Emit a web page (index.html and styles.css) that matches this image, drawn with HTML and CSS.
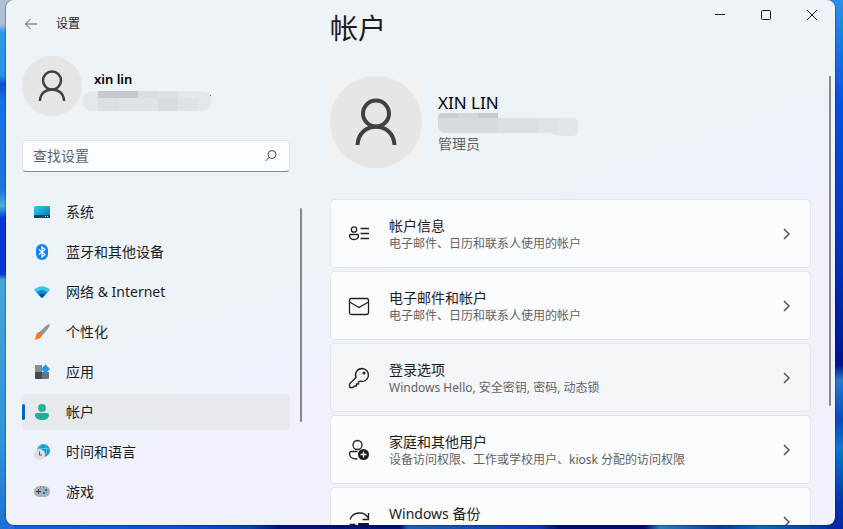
FILE: index.html
```html
<!DOCTYPE html>
<html lang="zh-CN">
<head>
    <meta charset="UTF-8">
    <title>设置</title>
    <meta name="viewport" content="width=device-width, initial-scale=1.0">
    <link rel="stylesheet" href="styles.css">
</head>
<body>
    <div class="window">
        <aside class="sidebar">
            <div class="titlebar">
                <button class="back" aria-label="返回">
                    <svg width="14" height="12" viewBox="0 0 14 12" fill="none" stroke="#555"><path d="M6.5 1 1.5 6l5 5M1.5 6H13"/></svg>
                </button>
                <span>设置</span>
            </div>

            <div class="user">
                <svg class="avatar-small" viewBox="0 0 60 60">
                    <circle cx="30" cy="30" r="30" fill="#e6e6e6"/>
                    <g fill="none" stroke="#404040" stroke-width="2.500"><circle cx="30" cy="24.500" r="9"/><path d="M18 45c0-15.500 24-15.500 24 0"/></g>
                </svg>
                <div class="user-text">
                    <strong>xin lin</strong>
                    <!-- e-mail escondido -->
                    <svg class="mask-small" width="131" height="20" viewBox="0 0 131 20">
                        <clipPath id="mask1"><rect width="130" height="20" rx="10"/></clipPath>
                        <g clip-path="url(#mask1)">
                            <rect width="131" height="20" fill="#e4e8ed"/>
                            <rect x="16" width="40" height="7" fill="#c6c9cf"/>
                            <rect x="56" width="20" height="7" fill="#dadde2"/>
                            <rect x="76" width="20" height="7" fill="#dde1e5"/>
                            <rect x="16" y="7" width="20" height="13" fill="#dcdfe4"/>
                            <rect x="36" y="7" width="40" height="13" fill="#e0e4e8"/>
                            <rect x="76" y="7" width="20" height="13" fill="#d8dce1"/>
                            <rect x="96" y="7" width="20" height="13" fill="#dfe3e8"/>
                        </g>
                        <rect x="128" y="4" width="1" height="1" fill="#777"/>
                    </svg>
                </div>
            </div>

            <form class="search">
                <input type="text" placeholder="查找设置" aria-label="查找设置">
                <button type="button" aria-label="搜索">
                    <svg width="12" height="12" viewBox="0 0 12 12" fill="none" stroke="#444"><circle cx="7" cy="4.500" r="4"/><path d="M4 7.500.5 11"/></svg>
                </button>
            </form>

            <nav class="menu">
                <a href="#">
                    <svg viewBox="0 0 16 16">
                        <defs><linearGradient id="sys" x2="1" y2="1"><stop stop-color="#35cbe5"/><stop offset="1" stop-color="#0873b6"/></linearGradient></defs>
                        <rect y="2" width="16" height="12" rx="1" fill="url(#sys)"/>
                        <path d="M0 11h16v2a1 1 0 0 1-1 1H1a1 1 0 0 1-1-1z" fill="#0a4a67"/>
                        <path d="M11 12h1v1h-1zM13 12h1v1h-1z" fill="#a8dcef"/>
                    </svg>
                    系统
                </a>
                <a href="#">
                    <svg viewBox="0 0 16 16">
                        <rect x="2" width="12" height="16" rx="6" fill="#0a84ff"/>
                        <path d="m5 5.500 6 5L8 13V3l3 2.500-6 5" fill="none" stroke="#fff" stroke-width="1.200"/>
                    </svg>
                    蓝牙和其他设备
                </a>
                <a href="#">
                    <svg viewBox="0 0 16 16">
                        <path d="M0 6q8-7.500 16 0l-8 8z" fill="#38c5ee"/>
                        <path d="M2.500 8.500q5.500-5 11 0L8 14z" fill="#1683cf"/>
                        <path d="M5 11q3-2.500 6 0l-3 3z" fill="#08509c"/>
                    </svg>
                    网络 &amp; Internet
                </a>
                <a href="#">
                    <svg viewBox="0 0 16 16">
                        <path d="M15.500.5c1 1-1 4-7 10.500L5.500 8C11 2.500 14.500-.5 15.500.5z" fill="#8f959d"/>
                        <path d="m5.500 8 3 3-1 1-3-3z" fill="#5e646d"/>
                        <path d="M4.500 8.500c2 0 3.500 1.500 3 3.500-.5 2.500-3.500 4-7.500 3.500 2-1 1.500-2 2-4 .3-1.500 1-3 2.500-3z" fill="#f47b20"/>
                    </svg>
                    个性化
                </a>
                <a href="#">
                    <svg viewBox="0 0 16 16">
                        <path d="M1 1h7v7H1z" fill="#888c92"/>
                        <path d="M1 8h7v7H2a1 1 0 0 1-1-1z" fill="#46494e"/>
                        <path d="M8 8h7v6a1 1 0 0 1-1 1H8z" fill="#6d7177"/>
                        <path d="m11.500.5 4.500 4.500-4.500 4.500L7 5z" fill="#1f9af0"/>
                    </svg>
                    应用
                </a>
                <a href="#" class="active">
                    <svg viewBox="0 0 16 16">
                        <circle cx="8" cy="4" r="4" fill="#22b89a"/>
                        <path d="M3 9h10a2 2 0 0 1 2 2c0 3-3 5-7 5s-7-2-7-5a2 2 0 0 1 2-2z" fill="#17b09a"/>
                    </svg>
                    帐户
                </a>
                <a href="#">
                    <svg viewBox="0 0 16 16">
                        <circle cx="9.500" cy="6.500" r="6.500" fill="#179ad3"/>
                        <path d="M4 4.500h11M10 .5c3.500 3.500 3.500 9 0 12M7 1c-2 3-2 6 0 9" stroke="#4cc4e6" fill="none"/>
                        <circle cx="5.500" cy="10.500" r="5.500" fill="#dedfe1"/>
                        <path d="M5.500 7.500V11H8" stroke="#555" fill="none"/>
                    </svg>
                    时间和语言
                </a>
                <a href="#">
                    <svg viewBox="0 0 16 16">
                        <rect y="2" width="16" height="11" rx="5.500" fill="#abb0b7"/>
                        <path d="M6 2.500h1v1H6zM9 2.500h1v1H9z" fill="#555"/>
                        <path d="M2 7.500h5M4.500 5v5" stroke="#33373d"/>
                        <path d="M11 5h2v2h-2zM9 8h2v2H9z" fill="#0870c5"/>
                        <path d="M12 8h1v1h-1z" fill="#777"/>
                    </svg>
                    游戏
                </a>
            </nav>
            <div class="scroll scroll-left"></div>
        </aside>

        <main class="content">
            <header class="content-header">
                <h1>帐户</h1>
                <div class="controls">
                    <button aria-label="最小化"><svg width="10" height="10" viewBox="0 0 10 10" stroke="#111"><path d="M0 4.500h10"/></svg></button>
                    <button aria-label="最大化"><svg width="10" height="10" viewBox="0 0 10 10" fill="none" stroke="#111"><rect x=".5" y=".5" width="9" height="9" rx="1"/></svg></button>
                    <button aria-label="关闭"><svg width="10" height="10" viewBox="0 0 10 10" stroke="#222"><path d="m0 0 10 10M10 0 0 10"/></svg></button>
                </div>
            </header>

            <section class="profile">
                <svg class="avatar-big" viewBox="0 0 92 92">
                    <circle cx="46" cy="46" r="46" fill="#e6e6e6"/>
                    <g fill="none" stroke="#404040" stroke-width="4"><circle cx="46" cy="37.500" r="13"/><path d="M27.500 69c1-24.500 36-24.500 37 0"/></g>
                </svg>
                <div class="profile-text">
                    <h2>XIN LIN</h2>
                    <svg width="140" height="23" viewBox="0 0 140 23">
                        <clipPath id="mask2"><path d="M5 0h55v5h75q5 0 5 5v8q0 5-8 5-15 0-20-3H8q-8 0-8-8V5q0-5 5-5z"/></clipPath>
                        <g clip-path="url(#mask2)">
                            <rect width="140" height="23" fill="#dfe2e7"/>
                            <rect width="20" height="5" fill="#cbced4"/>
                            <rect x="20" width="20" height="5" fill="#d3d6dc"/>
                            <rect x="40" width="20" height="5" fill="#c6c9cf"/>
                            <rect y="5" width="60" height="18" fill="#d7dade"/>
                            <rect x="60" y="5" width="40" height="18" fill="#dbdee3"/>
                            <rect x="120" y="5" width="20" height="18" fill="#e2e5ea"/>
                        </g>
                    </svg>
                    <p>管理员</p>
                </div>
            </section>

            <section class="cards">
                <a href="#" class="card">
                    <svg class="icon" viewBox="0 0 22 22">
                        <circle cx="6" cy="6.500" r="2.700"/>
                        <path d="M2.500 11.500h7q1 0 1 1c0 2.500-2 4-4.500 4s-4.500-1.500-4.500-4q0-1 1-1zM12.500 5.500H21M12.500 10.500H21M12.500 15.500H21"/>
                    </svg>
                    <span class="card-text"><b>帐户信息</b><small>电子邮件、日历和联系人使用的帐户</small></span>
                    <svg class="chevron" viewBox="0 0 8 12"><path d="m1 1 5 5-5 5"/></svg>
                </a>
                <a href="#" class="card">
                    <svg class="icon" viewBox="0 0 22 22">
                        <rect x="1.500" y="3.500" width="19" height="16" rx="2"/>
                        <path d="m1.500 7 9.500 5.500L20.500 7"/>
                    </svg>
                    <span class="card-text"><b>电子邮件和帐户</b><small>电子邮件、日历和联系人使用的帐户</small></span>
                    <svg class="chevron" viewBox="0 0 8 12"><path d="m1 1 5 5-5 5"/></svg>
                </a>
                <a href="#" class="card hover">
                    <svg class="icon" viewBox="0 0 22 22">
                        <path d="M14 1.500a6.500 6.500 0 1 1-2 12.700L10.500 15v2H8.500v2H6.500l-1.500 1.500H2q-.5 0-.5-.5v-3L8 10.500A6.500 6.500 0 0 1 14 1.500z"/>
                        <circle cx="16" cy="6" r="1.500" fill="#222" stroke="none"/>
                    </svg>
                    <span class="card-text"><b>登录选项</b><small>Windows Hello, 安全密钥, 密码, 动态锁</small></span>
                    <svg class="chevron" viewBox="0 0 8 12"><path d="m1 1 5 5-5 5"/></svg>
                </a>
                <a href="#" class="card">
                    <svg class="icon" viewBox="0 0 22 22">
                        <circle cx="9.500" cy="6" r="4.500"/>
                        <path d="M9.500 12.500h-6q-2 0-2 2c0 3.500 3 5.500 8 5.500"/>
                        <circle cx="15.500" cy="15.500" r="5.500" fill="#1b1b1b" stroke="none"/>
                        <path d="M15.500 12.500v6M12.500 15.500h6" stroke="#fff"/>
                    </svg>
                    <span class="card-text"><b>家庭和其他用户</b><small>设备访问权限、工作或学校用户、kiosk 分配的访问权限</small></span>
                    <svg class="chevron" viewBox="0 0 8 12"><path d="m1 1 5 5-5 5"/></svg>
                </a>
                <a href="#" class="card">
                    <svg class="icon" viewBox="0 0 22 22">
                        <path d="M2 8.500c3-8.500 15-8.500 18.500-1M20.500 2v6.500h-6M1.500 13.500h6"/>
                        <rect x="10" y="12" width="11" height="8" rx="1" fill="#1b1b1b" stroke="none"/>
                    </svg>
                    <span class="card-text"><b>Windows 备份</b></span>
                    <svg class="chevron" viewBox="0 0 8 12"><path d="m1 1 5 5-5 5"/></svg>
                </a>
            </section>
            <div class="scroll scroll-right"></div>
        </main>
    </div>
</body>
</html>
```

FILE: styles.css
```css
* {
    margin: 0;
    padding: 0;
    box-sizing: border-box;
}

body {
    height: 100vh;
    padding: 0 8px 4px 6px;
    overflow: hidden;
    font-family: "Noto Sans", "Noto Sans CJK SC", sans-serif;
    font-size: 14px;
    line-height: 20px;
    color: #1b1b1b;
    /* papel de parede: esquerda, direita e base */
    background:
        linear-gradient(#adc0d3 0 24px, #2b9de4 32px, #2593e2 76px, #0b4fd5 84px, #1471e2 100px, #1b78dd 190px, #4ab0dc 206px, #0637cf 218px, #0637cf 274px, #43a6d8 280px, #2f95d5 440px, #1c70d8 529px) left / 14px 100% no-repeat,
        linear-gradient(#2b93ea, #0a50e0 100px, #0238c0 240px, #001590 365px, #2d79c8 380px, #0a48c0 420px, #0a78d2 448px, #0535b0 500px, #0328a0) right / 16px 100% no-repeat,
        linear-gradient(90deg, #1565d8, #0b50cc 180px, #0a3fb0 250px, #00107a 280px, #001078 400px, #1c60b8 408px, #0b38b0 540px, #000c74 560px, #000c74 645px, #2b80b8 660px, #0838a8 720px, #0b68b8 760px, #0328a0);
}

button {
    border: none;
    background: none;
}

svg {
    display: block;
    flex-shrink: 0;
}

a {
    color: inherit;
    text-decoration: none;
}

.window {
    display: flex;
    height: 100%;
    overflow: hidden;
    border-radius: 8px;
    background: linear-gradient(160deg, #eef3f8 0%, #eef3f8 45%, #eff2fb 60%);
    box-shadow: 0 0 1px 1px rgba(0, 20, 60, 0.3);
}

.sidebar {
    position: relative;
    flex: 0 0 300px;
    padding: 0 16px;
}

.titlebar {
    display: flex;
    align-items: center;
    gap: 18px;
    height: 48px;
    font-size: 12px;
}

.back {
    display: flex;
    align-items: center;
    justify-content: flex-end;
    width: 16px;
    height: 16px;
}

.user {
    display: flex;
    align-items: center;
    margin-top: 8px;
}

.avatar-small {
    width: 60px;
    height: 60px;
}

.user-text {
    padding-top: 8px;
}

.user-text strong {
    display: block;
    padding-left: 12px;
    font-size: 13px;
    font-weight: 600;
    line-height: 20px;
    color: #000;
}

.mask-small {
    margin-top: 2px;
}

.search {
    display: flex;
    align-items: center;
    height: 32px;
    margin-top: 24px;
    padding: 0 12px 0 10px;
    border: 1px solid #dfe4ea;
    border-bottom-color: #868a90;
    border-radius: 4px;
    background: #fcfdfe;
}

.search input {
    flex: 1;
    min-width: 0;
    border: none;
    outline: none;
    background: none;
    font: inherit;
}

.search input::placeholder {
    color: #606368;
}

.menu {
    display: flex;
    flex-direction: column;
    gap: 4px;
    margin-top: 22px;
}

.menu a {
    display: flex;
    align-items: center;
    flex-shrink: 0;
    gap: 16px;
    height: 36px;
    padding-left: 12px;
    border-radius: 4px;
}

.menu svg {
    width: 16px;
    height: 16px;
}

.menu .active {
    position: relative;
    background: #e6e9ee;
}

.menu .active::before {
    content: "";
    position: absolute;
    left: 0;
    width: 3px;
    height: 16px;
    border-radius: 2px;
    background: #0067c0;
}

.scroll {
    position: absolute;
    right: 4px;
    width: 2px;
    border-radius: 1px;
    background: #86888c;
}

.scroll-left {
    top: 208px;
    height: 214px;
}

.scroll-right {
    top: 76px;
    height: 330px;
}

.content {
    position: relative;
    flex: 1;
    min-width: 0;
    padding: 0 24px;
}

.content-header {
    display: flex;
    justify-content: space-between;
    align-items: flex-start;
    margin-right: -24px;
}

.content-header h1 {
    padding-top: 8px;
    font-size: 28px;
    font-weight: 400;
    line-height: 40px;
}

.controls {
    display: flex;
}

.controls button {
    display: flex;
    align-items: center;
    justify-content: center;
    width: 46px;
    height: 30px;
}

.profile {
    display: flex;
    align-items: center;
    gap: 16px;
    margin-top: 28px;
}

.avatar-big {
    width: 92px;
    height: 92px;
    background: #f1f2f3;
}

.profile h2 {
    font-size: 17px;
    font-weight: 400;
    line-height: 20px;
    color: #000;
}

.profile p {
    color: #606266;
    line-height: 16px;
}

.cards {
    display: flex;
    flex-direction: column;
    gap: 3px;
    margin-top: 31px;
}

.card {
    display: flex;
    align-items: center;
    height: 69px;
    padding: 0 19px 0 17px;
    border: 1px solid #e1e5ec;
    border-radius: 4px;
    background: #fbfcfe;
}

.card.hover {
    background: #f4f6fa;
}

.icon {
    width: 22px;
    height: 22px;
    margin-right: 19px;
    fill: none;
    stroke: #222;
    stroke-width: 1.3;
}

.card-text {
    flex: 1;
    align-self: flex-start;
    padding-top: 17px;
}

.card-text b {
    display: block;
    font-weight: 400;
    line-height: 18px;
}

.card-text small {
    display: block;
    font-size: 12px;
    line-height: 18px;
    color: #606266;
}

.chevron {
    width: 8px;
    height: 12px;
    fill: none;
    stroke: #444;
    stroke-width: 1.3;
}
```
